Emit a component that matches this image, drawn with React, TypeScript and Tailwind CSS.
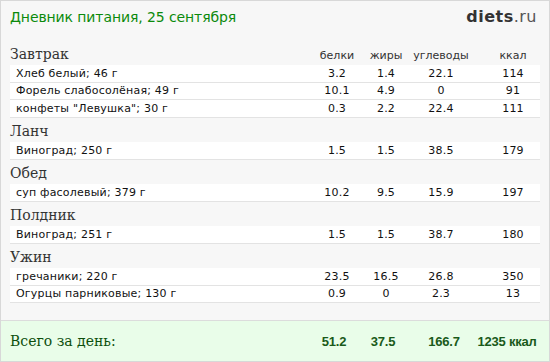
import React from 'react';

type Item = { name: string; p: string; f: string; c: string; k: string };
type Meal = { title: string; items: Item[] };

const meals: Meal[] = [
  {
    title: 'Завтрак',
    items: [
      { name: 'Хлеб белый; 46 г', p: '3.2', f: '1.4', c: '22.1', k: '114' },
      { name: 'Форель слабосолёная; 49 г', p: '10.1', f: '4.9', c: '0', k: '91' },
      { name: 'конфеты "Левушка"; 30 г', p: '0.3', f: '2.2', c: '22.4', k: '111' },
    ],
  },
  { title: 'Ланч', items: [{ name: 'Виноград; 250 г', p: '1.5', f: '1.5', c: '38.5', k: '179' }] },
  { title: 'Обед', items: [{ name: 'суп фасолевый; 379 г', p: '10.2', f: '9.5', c: '15.9', k: '197' }] },
  { title: 'Полдник', items: [{ name: 'Виноград; 251 г', p: '1.5', f: '1.5', c: '38.7', k: '180' }] },
  {
    title: 'Ужин',
    items: [
      { name: 'гречаники; 220 г', p: '23.5', f: '16.5', c: '26.8', k: '350' },
      { name: 'Огурцы парниковые; 130 г', p: '0.9', f: '0', c: '2.3', k: '13' },
    ],
  },
];

const sans = "font-['DejaVu_Sans',Verdana,sans-serif]";
const serif = "font-['DejaVu_Serif',Georgia,serif]";
const cols = 'grid grid-cols-[1fr_50px_48px_62px_68px]';

function Row({ item }: { item: Item }) {
  return (
    <div className={`${cols} ${sans} items-center h-[17.5px] bg-white border-b border-[#e3e3e3] text-[11px] leading-none text-[#111] tracking-[0.2px]`}>
      <span className="pl-[6px] truncate">{item.name}</span>
      <span className="text-center">{item.p}</span>
      <span className="text-center">{item.f}</span>
      <span className="text-center">{item.c}</span>
      <span className="text-center pl-[14px]">{item.k}</span>
    </div>
  );
}

export default function App() {
  return (
    <div className="w-[550px] h-[362px] bg-[#f7f7f7] border border-[#d8d8d8] flex flex-col overflow-hidden">
      {/* Header */}
      <div className="h-[32px] px-[9px] flex items-center justify-between">
        <h1 className={`${sans} text-[14px] text-[#0b8a0b] font-normal leading-none tracking-[-0.1px]`}>
          Дневник питания, 25 сентября
        </h1>
        <div className={`${sans} text-[16px] leading-none pr-[3px] tracking-[0.5px]`}>
          <span className="font-bold text-[#333]">diets</span>
          <span className="text-[#555]">.ru</span>
        </div>
      </div>

      {/* Meals */}
      <div className="px-[9px]">
        {meals.map((meal, i) => (
          <div key={meal.title}>
            {i === 0 ? (
              <div className={`${cols} h-[32px] items-end pb-[4px]`}>
                <span className={`${serif} text-[14px] leading-none text-[#333]`}>{meal.title}</span>
                <span className={`${sans} text-[11px] leading-none text-[#333] text-center`}>белки</span>
                <span className={`${sans} text-[11px] leading-none text-[#333] text-center`}>жиры</span>
                <span className={`${sans} text-[11px] leading-none text-[#333] text-center`}>углеводы</span>
                <span className={`${sans} text-[11px] leading-none text-[#333] text-center pl-[14px]`}>ккал</span>
              </div>
            ) : (
              <div className={`${serif} h-[24.5px] flex items-end pb-[4px] text-[14px] leading-none text-[#333]`}>
                {meal.title}
              </div>
            )}
            {meal.items.map((it) => (
              <Row key={it.name} item={it} />
            ))}
          </div>
        ))}
      </div>

      <div className="flex-1" />

      {/* Total */}
      <div className="h-[41px] border-t border-[#dcdcdc] bg-[#e9fde9] flex items-center pl-[9px] pr-[11px]">
        <span className={`${serif} text-[14px] leading-none text-[#0d4f0d] flex-1`}>Всего за день:</span>
        <div className="flex whitespace-nowrap font-['Liberation_Sans',Arial,sans-serif] font-bold text-[13px] leading-none text-[#1a5a1a] tracking-[-0.2px]">
          <span className="w-[40px] text-center">51.2</span>
          <span className="w-[40px] ml-[9px] text-center">37.5</span>
          <span className="w-[40px] ml-[21px] text-center">166.7</span>
          <span className="w-[62px] ml-[12px] text-center">1235 ккал</span>
        </div>
      </div>
    </div>
  );
}
